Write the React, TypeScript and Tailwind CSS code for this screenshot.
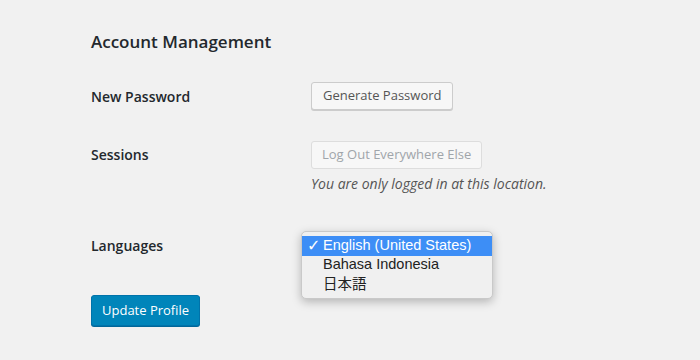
const LANGS = ['English (United States)', 'Bahasa Indonesia', '日本語'];

export default function App() {
  return (
    <div className="min-h-screen bg-[#f1f1f1] pl-[91px] pt-[30px] text-[#23282d] font-['Open_Sans',sans-serif]">
      <h2 className="text-[17px] leading-[23px] font-semibold">Account Management</h2>

      {/* new password */}
      <div className="mt-[29px] flex items-center">
        <div className="w-[220px] text-[14px] font-semibold">New Password</div>
        <button className="h-[28px] px-[11px] border border-[#ccc] bg-[#f7f7f7] rounded-[3px] text-[13px] text-[#555] shadow-[0_1px_0_#ccc]">
          Generate Password
        </button>
      </div>

      {/* sessions */}
      <div className="mt-[31px] flex items-start">
        <div className="w-[220px] text-[14px] font-semibold leading-[28px]">Sessions</div>
        <div>
          <button
            disabled
            className="h-[28px] px-[10px] border border-[#ddd] bg-[#f7f7f7] rounded-[3px] text-[13px] text-[#a0a5aa]"
          >
            Log Out Everywhere Else
          </button>
          <p className="mt-[5px] text-[14px] leading-[20px] italic text-[#555]">
            You are only logged in at this location.
          </p>
        </div>
      </div>

      {/* languages */}
      <div className="mt-[37px] flex items-center h-[28px]">
        <div className="w-[220px] text-[14px] font-semibold">Languages</div>
        <div className="relative h-[28px] w-[182px]">
          <div className="absolute top-0 left-[-10px] w-[192px] rounded-[5px] bg-[#f0f0f0] border border-[#c9c9c9] shadow-[0_3px_10px_rgba(0,0,0,0.25)] pt-[4px] pb-[3px] text-[14.5px] text-[#222] z-10">
            {LANGS.map((l, i) => (
              <div
                key={l}
                className={`h-[19.5px] flex items-center pl-[21px] relative ${
                  i === 0 ? 'bg-[#3d8ef6] text-white' : ''
                } font-['Liberation_Sans','Noto_Sans_CJK_JP',sans-serif]`}
              >
                {i === 0 && (
                  <span className="absolute left-[5px] font-['DejaVu_Sans',sans-serif] font-bold text-[16px] leading-none">
                    ✓
                  </span>
                )}
                {l}
              </div>
            ))}
          </div>
        </div>
      </div>

      <button className="mt-[36px] h-[31px] px-[10px] rounded-[3px] bg-[#0085ba] border border-[#0073aa] text-white text-[13px] shadow-[0_1px_0_#006799]">
        Update Profile
      </button>
    </div>
  );
}
